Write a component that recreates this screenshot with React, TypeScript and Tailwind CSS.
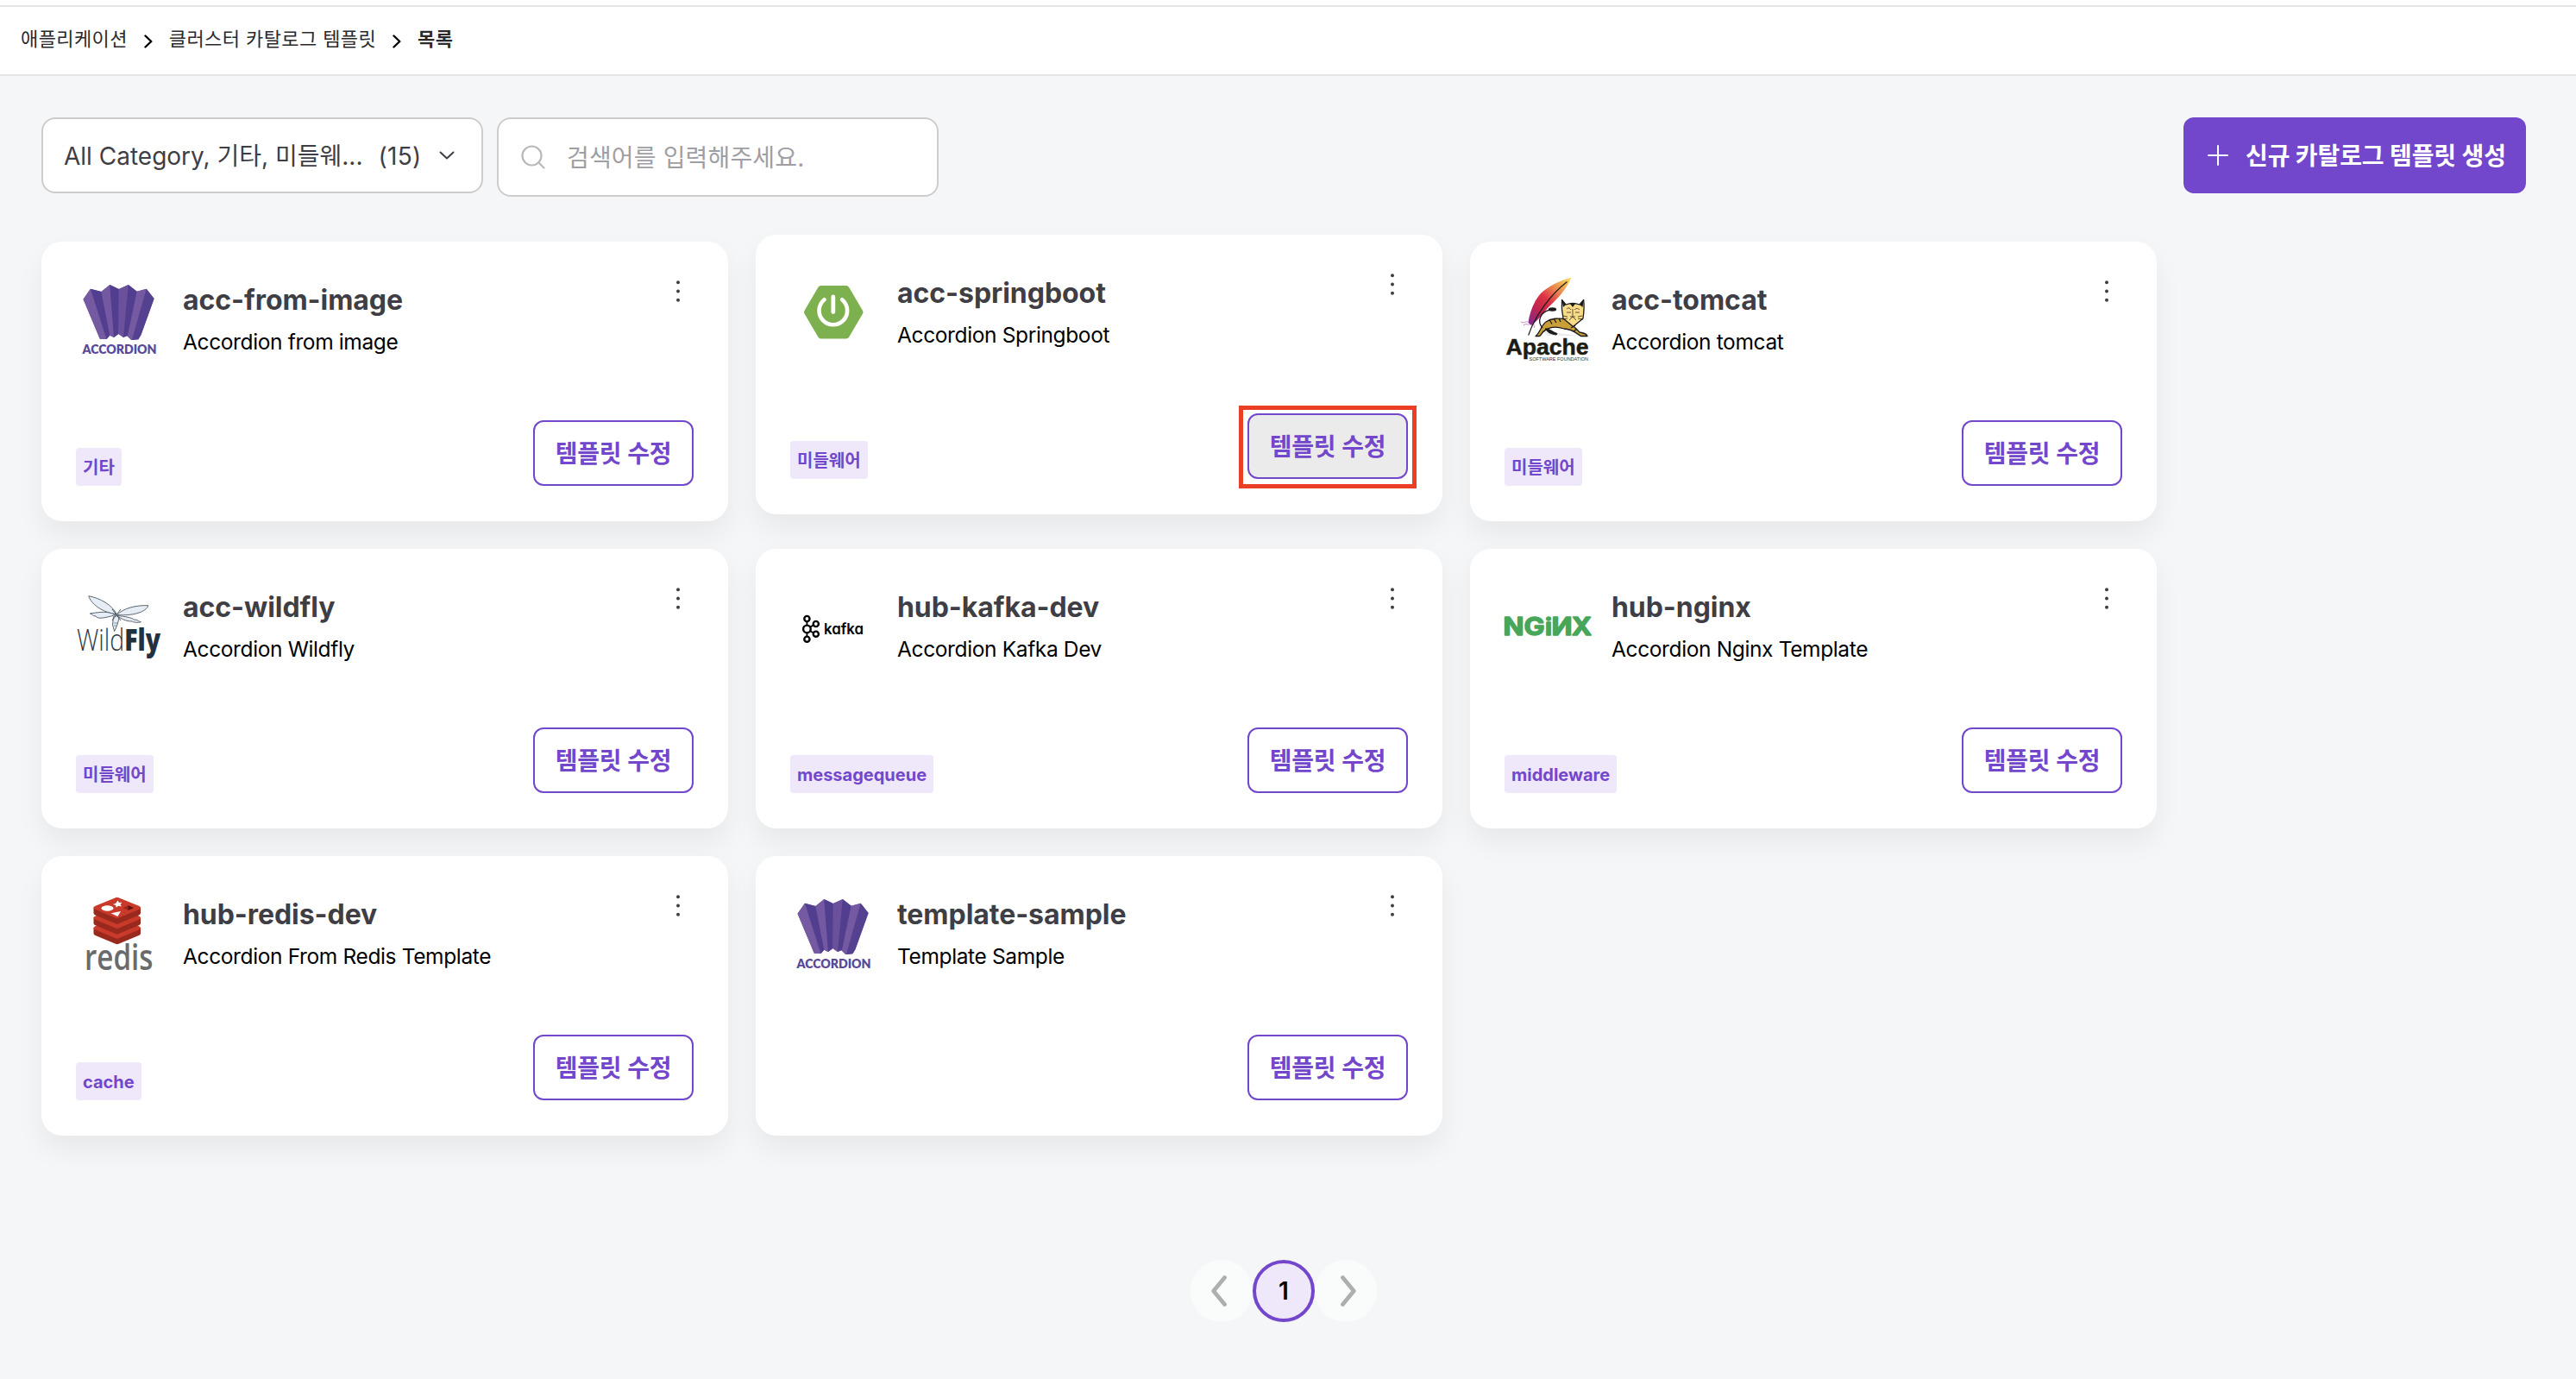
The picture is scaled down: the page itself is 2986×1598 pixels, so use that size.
import type { ReactNode } from "react";

function AccordionLogo() {
  return (
    <svg viewBox="0 0 100 100" className="size-[100px]">
      <path d="M8.5 26.7 16.9 14.7 29.4 18 39.3 10 49.8 15 60.8 10 70.7 17.7 81.7 14.7 90.6 26 75.5 68 72.3 73.3 64 74 59 69 55 71 49.3 67 44 71 39.3 68.7 35.7 73 27.8 72.7z" fill="#66509a" />
      <path d="M16.9 14.7 29.4 18 39.5 68 35.7 73z" fill="#513e8e" />
      <path d="M8.5 26.7 16.9 14.7 35 73 27.8 72.7z" fill="#755aa2" />
      <path d="M29.4 18 39.3 10 44 71 39.3 68.7z" fill="#7459a2" />
      <path d="M39.3 10 49.8 15 49.3 67 44 71z" fill="#513e8e" />
      <path d="M49.8 15 60.8 10 55 71 49.3 67z" fill="#6b519c" />
      <path d="M60.8 10 70.7 17.7 60 69 55 71z" fill="#513e8e" />
      <path d="M70.7 17.7 81.7 14.7 65 74 60 69z" fill="#755aa2" />
      <path d="M81.7 14.7 90.6 26 75.5 68 72.3 73.3 65 74z" fill="#54418f" />
      <text x="7.5" y="89.5" textLength="86" lengthAdjust="spacingAndGlyphs" fontSize="15.2" fontWeight="800" fontFamily="Lato, sans-serif" fill="#5b4896">ACCORDION</text>
    </svg>
  );
}

function SpringLogo() {
  return (
    <svg viewBox="0 0 100 100" className="size-[100px]">
      <path d="M35.5 22.5H65L81 49.7 65 77H35.5L19.5 49.7z" fill="#7db04f" stroke="#7db04f" strokeWidth="7" strokeLinejoin="round" />
      <path d="M39.5 35.3a16.3 16.3 0 1 0 20.6 0" fill="none" stroke="#fff" strokeWidth="4.6" strokeLinecap="round" />
      <path d="M49.8 32v17.5" stroke="#fff" strokeWidth="4.8" strokeLinecap="round" />
    </svg>
  );
}

function TomcatLogo() {
  return (
    <svg viewBox="0 0 100 100" className="size-[100px]">
      <defs>
        <linearGradient id="feather" x1="0.9" y1="0" x2="0.1" y2="1">
          <stop offset="0" stopColor="#f6d55c" />
          <stop offset="0.28" stopColor="#e9864f" />
          <stop offset="0.5" stopColor="#dd3445" />
          <stop offset="0.72" stopColor="#c2244c" />
          <stop offset="1" stopColor="#85298a" />
        </linearGradient>
      </defs>
      <path d="M77.3 1.7C66 4 50 12 42 20 34 29 29 42 27.5 54L31 57C38 52 44 44 50 37 59 28 72 16 77.3 1.7z" fill="url(#feather)" />
      <path d="M19 53c3 2 6-1 8 0M22 57c3-3 5 0 7-1M34 55c-1 2 2 3 0 5" stroke="#c98ac4" strokeWidth="1" fill="none" />
      <path d="M72.5 6.5C55 20 36 44 27.7 68.5" stroke="#1b1b1b" strokeWidth="1.2" fill="none" />
      <path d="M44 64 88 69H50z" fill="#ebebeb" />
      <path d="M36 69.5C41 66 43 56 48 53 55 48 64 49 71 49.5L80 58 87 65C91 66 95 66 96 69.5H88.5C83 66 78 61 69 61 60 58 52 59 47 63 43 64 43 69 40.5 69.5z" fill="#cb9f37" stroke="#1b1b1b" strokeWidth="1.3" strokeLinejoin="round" />
      <path d="M47 61C51 60 56 65 61 66.5L60 68C53 67 50 65 47 61z" fill="#1b1b1b" stroke="#1b1b1b" />
      <path d="M52 50.5l3 5M57 49l3 5M63 49l2 4M77 60l5-3M80 64l4-3" stroke="#1b1b1b" strokeWidth="1.3" />
      <path d="M44 60C37 52 42 41 53 39" stroke="#1b1b1b" strokeWidth="1.3" fill="none" />
      <ellipse cx="55.5" cy="38.5" rx="4.6" ry="2.2" fill="#1b1b1b" />
      <path d="M66.5 27.5 71 33C76 31 82 31 87 33L91.7 27.5C92.5 34 92 42 91 49L79.5 58.5 68 49C66.5 42 66 34 66.5 27.5z" fill="#f8da87" stroke="#1b1b1b" strokeWidth="1.3" strokeLinejoin="round" />
      <path d="M66.5 27.5 71 33 68 36zM91.7 27.5 87 33 90.5 36zM76 32h6l-3 4z" fill="#1b1b1b" />
      <path d="M72 38c2-2 4-1 5 1M81 39c2-2 4-2 6 0M72 42h5M82 42h5M79 38v9M76 47h6M79 47l-4 4M79 47l4 4M68 46l5 1M90 46l-5 1M67 50l6-1M91 50l-6-1" stroke="#1b1b1b" strokeWidth="0.7" fill="none" />
      <text x="1.5" y="91" textLength="96" lengthAdjust="spacingAndGlyphs" fontSize="25.5" fontWeight="700" fontFamily="Liberation Sans, sans-serif" fill="#1c1c14" stroke="#1c1c14" strokeWidth="0.5">Apache</text>
      <text x="28.5" y="97.8" textLength="68.5" lengthAdjust="spacingAndGlyphs" fontSize="5.4" fontFamily="Liberation Sans, sans-serif" fill="#333">SOFTWARE FOUNDATION</text>
    </svg>
  );
}

function WildflyLogo() {
  return (
    <svg viewBox="0 0 100 100" className="size-[100px] overflow-visible">
      <g fill="#e6edf4" stroke="#5d6873" strokeWidth="1" strokeLinejoin="round">
        <path d="M47.2 35.7C42 25 28 17 14.8 14.7 17 23 30 34 47.2 35.7z" />
        <path d="M48 36.5C54 29 70 25 83.8 25.7 82 33 66 38 48 36.5z" />
        <path d="M46 36.5C36 32 30 33 16.3 35 20 36 19 38 23 38 25 42 34 40 46 36.5z" />
        <path d="M48 37.5C56 38 66 40 67 42 72 42 72 44 75.4 44.7 72 46 66 45 65 44 58 44 52 41 48 37.5z" />
        <path d="M43.5 38.5C46 37 49 38 50 40L48 48 44.6 55.7 42.5 48z" />
      </g>
      <path d="M42 30l10 13M52 30L42 43" stroke="#39444f" strokeWidth="0.9" />
      <path d="M44 46h4M44 49h3.5" stroke="#7b8791" strokeWidth="0.9" />
      <text x="1" y="78.3" textLength="97" lengthAdjust="spacingAndGlyphs" fontSize="34.5" fontWeight="300" fontFamily="Open Sans, sans-serif" fill="#2d3a48">
        Wild<tspan fontWeight="800" fill="#23303f">Fly</tspan>
      </text>
    </svg>
  );
}

function KafkaLogo() {
  return (
    <svg viewBox="0 0 100 100" className="size-[100px]">
      <g fill="none" stroke="#000" strokeWidth="2.4">
        <circle cx="19.4" cy="41" r="3.1" />
        <circle cx="29.8" cy="47" r="3.1" />
        <circle cx="19.4" cy="52.9" r="4.3" />
        <circle cx="29.8" cy="58.7" r="3.1" />
        <circle cx="19.4" cy="64.7" r="3.1" />
        <path d="M19.4 44v4.6M19.4 57.2v4.4M23 50.6l4.2-2.2M23 55.2l4.2 2.2" strokeWidth="1.8" />
      </g>
      <text x="39" y="59" textLength="46" lengthAdjust="spacingAndGlyphs" fontSize="17" fontWeight="600" fontFamily="Inter, sans-serif" fill="#000" className="[font-feature-settings:'cv11']">kafka</text>
    </svg>
  );
}

function NginxLogo() {
  return (
    <svg viewBox="0 0 100 100" className="size-[100px] overflow-visible">
      <g fontSize="28" fontWeight="700" fontFamily="Inter, sans-serif" fill="#48a65a" stroke="#48a65a" strokeWidth="1.4" strokeLinejoin="round">
        <text x="-1.5" y="60.3" textLength="24" lengthAdjust="spacingAndGlyphs">N</text>
        <text x="22.5" y="60.3" textLength="24" lengthAdjust="spacingAndGlyphs">G</text>
        <text x="47" y="60.3" fontSize="27" textLength="8" lengthAdjust="spacingAndGlyphs">i</text>
        <text x="-78.5" y="60.3" transform="scale(-1 1)" textLength="24" lengthAdjust="spacingAndGlyphs">N</text>
        <text x="78" y="60.3" textLength="23" lengthAdjust="spacingAndGlyphs">X</text>
      </g>
    </svg>
  );
}

function RedisLogo() {
  return (
    <svg viewBox="0 0 100 100" className="size-[100px] overflow-visible">
      {[23.5, 11.8, 0].map((dy) => (
        <g key={dy} transform={`translate(0 ${dy})`}>
          <path d="M20.5 19.5V26Q20.5 27.5 22 28.3L46 38.3Q47.7 39 49.5 38.3L73.5 28.3Q75 27.5 75 26V19.5z" fill="#99281d" />
          <path d="M20.5 20Q20.5 18.8 22 18L46 8.2Q47.7 7.3 49.5 8.2L73.5 18Q75 18.8 75 20 75 21 73.5 21.7L49.5 31.8Q47.7 32.6 46 31.8L22 21.7Q20.5 21 20.5 20z" fill="#c93a2b" />
        </g>
      ))}
      <ellipse cx="36.5" cy="20.5" rx="7" ry="3.2" fill="#fff" />
      <path d="m48.5 11.5 1.6 2.4 3.4-.1-2 2.2 1.4 2.6-3.5-.9-2.9 1.8-.2-2.6-3.4-1 3.3-1.2z" fill="#fff" />
      <path d="M40.5 26.2 52 24 48.500 30z" fill="#fff" />
      <path d="M54.5 20 60.5 17.3V22.8z" fill="#99281d" />
      <path d="M60.5 17 67 20 60.5 23z" fill="#5f120c" />
      <text x="10" y="92.3" textLength="79.5" lengthAdjust="spacingAndGlyphs" fontSize="42" fontWeight="600" fontFamily="Open Sans, sans-serif" fill="#6a6b6d">redis</text>
    </svg>
  );
}

function Chevron({ className }: { className: string }) {
  return (
    <svg viewBox="0 0 10 16" className={className} fill="none" stroke="currentColor" strokeWidth="2.4" strokeLinecap="round" strokeLinejoin="round">
      <path d="M1.5 1.5 8.3 8 1.5 14.5" />
    </svg>
  );
}

function PageArrow({ flipped = false }: { flipped?: boolean }) {
  return (
    <button className={`flex size-[72px] items-center justify-center rounded-full bg-[#fafcfb] pl-1.5 ${flipped ? "-scale-x-100" : ""}`}>
      <svg viewBox="0 0 18 36" className="h-9 w-[18px]" fill="none" stroke="#aeadb0" strokeWidth="4.8" strokeLinecap="round" strokeLinejoin="round">
        <path d="M2.5 2.5 15.3 18 2.5 33.5" />
      </svg>
    </button>
  );
}

type Template = {
  name: string;
  description: string;
  tag?: string;
  logo: ReactNode;
  active?: boolean;
};

const templates: Template[] = [
  { name: "acc-from-image", description: "Accordion from image", tag: "기타", logo: <AccordionLogo /> },
  { name: "acc-springboot", description: "Accordion Springboot", tag: "미들웨어", logo: <SpringLogo />, active: true },
  { name: "acc-tomcat", description: "Accordion tomcat", tag: "미들웨어", logo: <TomcatLogo /> },
  { name: "acc-wildfly", description: "Accordion Wildfly", tag: "미들웨어", logo: <WildflyLogo /> },
  { name: "hub-kafka-dev", description: "Accordion Kafka Dev", tag: "messagequeue", logo: <KafkaLogo /> },
  { name: "hub-nginx", description: "Accordion Nginx Template", tag: "middleware", logo: <NginxLogo /> },
  { name: "hub-redis-dev", description: "Accordion From Redis Template", tag: "cache", logo: <RedisLogo /> },
  { name: "template-sample", description: "Template Sample", logo: <AccordionLogo /> },
];

function TemplateCard({ name, description, tag, logo, active }: Template) {
  return (
    <article className={`flex h-[324px] flex-col justify-between rounded-3xl bg-white px-10 pt-10 pb-[41px] shadow-[0_16px_32px_rgba(0,0,0,0.06)] ${active ? "-translate-y-2" : ""}`}>
      <div className="flex items-start">
        {logo}
        <div className="ml-6 flex flex-1 flex-col pt-2">
          <h2 className="text-[32px] leading-10 font-bold tracking-[-0.05px] whitespace-nowrap text-[#3f3e45]">{name}</h2>
          <p className="mt-3 text-[24.5px] leading-8 tracking-[-0.37px] whitespace-nowrap text-black">{description}</p>
        </div>
        <button className="mr-4 pt-[5px]" aria-label="menu">
          <svg viewBox="0 0 4 25" className="h-[25px] w-1" fill="#3f3e45">
            <circle cx="2" cy="2.3" r="2" />
            <circle cx="2" cy="12.5" r="2" />
            <circle cx="2" cy="22.7" r="2" />
          </svg>
        </button>
      </div>
      <div className="flex items-end justify-between">
        {tag ? (
          <span className="flex h-11 items-center rounded bg-[#efe8fb] px-2 pt-px text-[20px] leading-none font-bold text-[#7347cc]">{tag}</span>
        ) : (
          <span />
        )}
        <div className="relative">
          <button className={`flex h-[76px] w-[186px] items-center justify-center rounded-xl border-2 border-[#7347cc] pt-0.5 text-[28px] leading-none font-semibold tracking-[-0.2px] text-[#7347cc] ${active ? "bg-[#ebebeb]" : "bg-white"}`}>
            템플릿 수정
          </button>
          {active && <span className="absolute -inset-x-[10px] -top-[9px] -bottom-[11px] border-[5px] border-[#ea3f24]" />}
        </div>
      </div>
    </article>
  );
}

export default function App() {
  return (
    <div className="flex h-[1598px] w-[2986px] flex-col overflow-hidden bg-[#f4f6f8] font-['Inter','Noto_Sans_CJK_KR',sans-serif]">
      <div className="h-1.5 shrink-0 bg-white" />
      <nav className="flex h-[82px] shrink-0 items-center border-y-2 border-[#e5e5e5] bg-white pb-1 pl-6 text-[22px] tracking-[0.4px] text-[#2a2a2c]">
        <span>애플리케이션</span>
        <Chevron className="mx-[19px] mt-[5px] h-4 w-2.5 text-black" />
        <span>클러스터 카탈로그 템플릿</span>
        <Chevron className="mx-[19px] mt-[5px] h-4 w-2.5 text-black" />
        <span className="font-bold">목록</span>
      </nav>

      <main className="flex flex-1 flex-col pt-12 pr-[58px] pl-12">
        <div className="flex items-start">
          <button className="flex h-[88px] w-[512px] items-center rounded-2xl border-2 border-[#cdcdcd] bg-white pl-6 text-[28px] text-[#3f3e45]">
            <span className="h-[33px] overflow-hidden leading-[34px] whitespace-nowrap">All Category, 기타, 미들웨...</span>
            <span className="ml-[18px] h-[33px] overflow-hidden leading-[34px] tracking-[0.3px]">(15)</span>
            <svg viewBox="0 0 18 10" className="ml-5 h-2.5 w-[18px]" fill="none" stroke="currentColor" strokeWidth="2" strokeLinecap="round" strokeLinejoin="round">
              <path d="M1.5 1.5 9 8.5 16.5 1.5" />
            </svg>
          </button>
          <div className="ml-4 flex h-[92px] w-[512px] items-center rounded-2xl border-2 border-[#cdcdcd] bg-white pl-[26px] text-[28px] text-[#9f9ea4]">
            <svg viewBox="0 0 28 28" className="h-7 w-7" fill="none" stroke="#b9b8bb" strokeWidth="2.2" strokeLinecap="round">
              <circle cx="12.5" cy="12.5" r="11" />
              <path d="m20.5 20.5 6 6" />
            </svg>
            <span className="ml-[25px] pt-px tracking-[0.15px]">검색어를 입력해주세요.</span>
          </div>
          <button className="ml-auto flex h-[88px] w-[397px] items-center rounded-xl bg-[#7347cc] pl-7 text-[28px] font-bold text-white">
            <svg viewBox="0 0 24 24" className="size-6" stroke="currentColor" strokeWidth="2" strokeLinecap="round">
              <path d="M1 12h22M12 1v22" />
            </svg>
            <span className="ml-5 pt-px tracking-[-0.1px] whitespace-nowrap">신규 카탈로그 템플릿 생성</span>
          </button>
        </div>

        <section className="mt-[52px] grid w-[2452px] grid-cols-3 gap-8">
          {templates.map((template) => (
            <TemplateCard key={template.name} {...template} />
          ))}
        </section>

        <div className="mt-36 flex justify-center">
          <PageArrow flipped />
          <span className="flex size-[72px] items-center justify-center rounded-full border-4 border-[#7347cc] bg-[#efe8fb] text-[28px] font-semibold text-black">1</span>
          <PageArrow />
        </div>
      </main>
    </div>
  );
}
